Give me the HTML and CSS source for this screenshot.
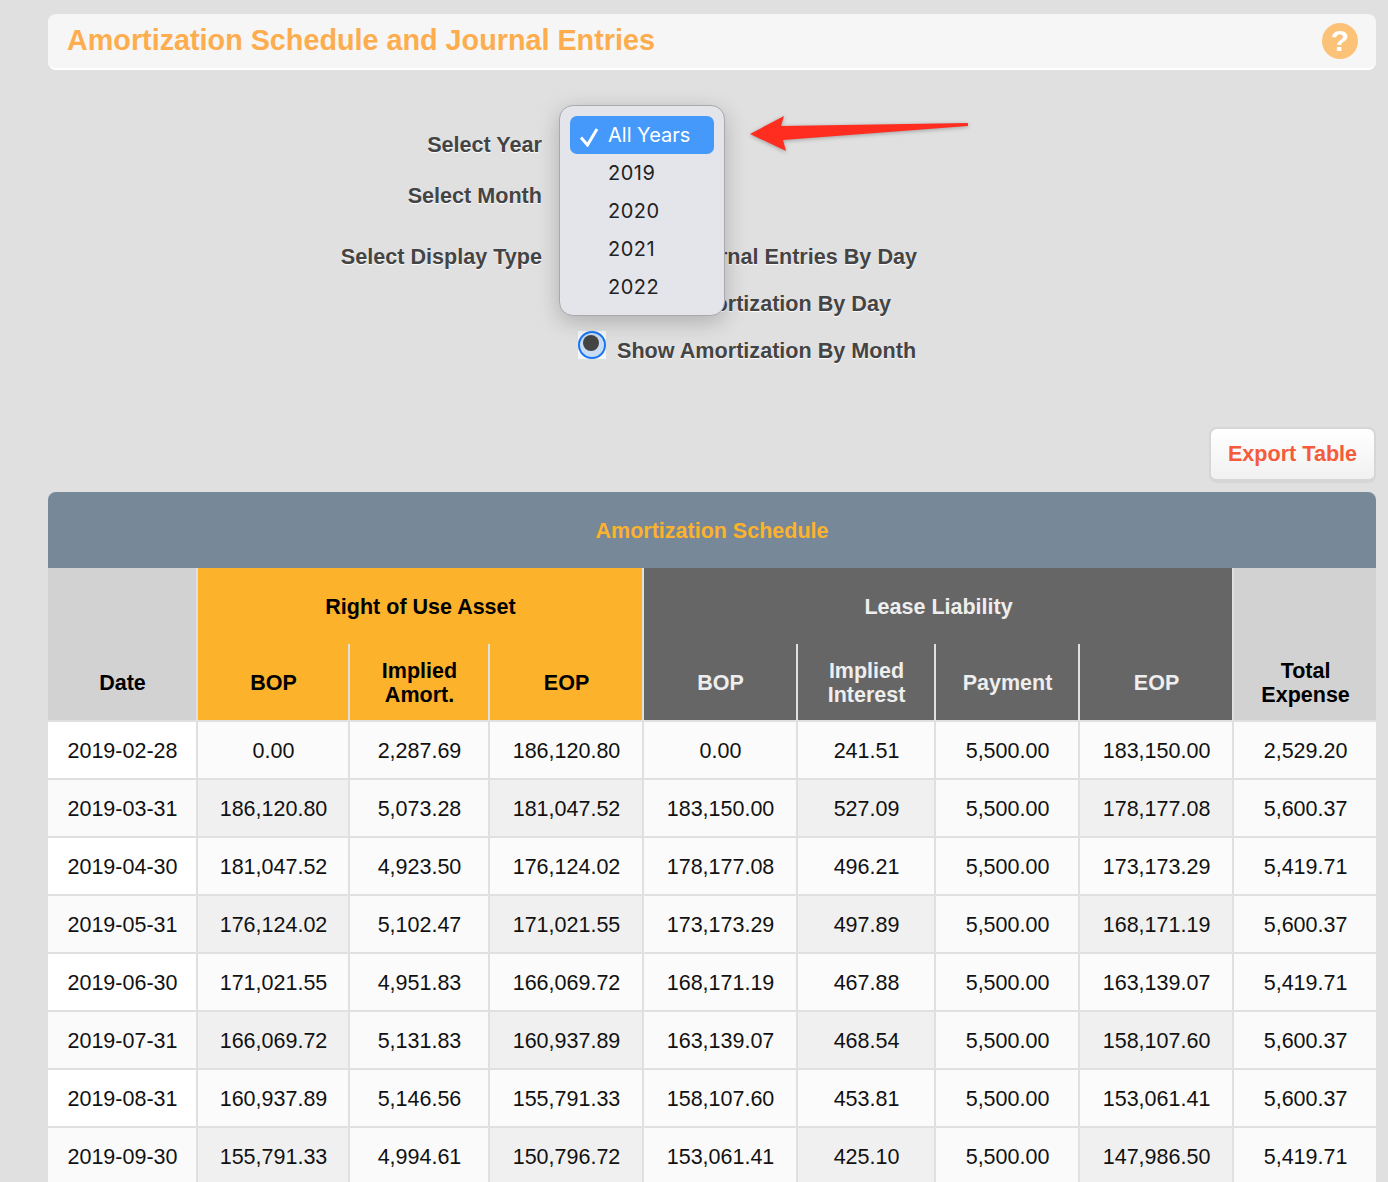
FILE: index.html
```html
<!DOCTYPE html>
<html lang="en">
<head>
  <meta charset="UTF-8" />
  <title>Amortization Schedule and Journal Entries</title>
  <link rel="stylesheet" href="styles.css">
</head>
<body>

  <div class="page-header">
    <h1>Amortization Schedule and Journal Entries</h1>
    <span class="help-icon">?</span>
  </div>

  <div class="filters">
    <label class="filter-label year-label">Select Year</label>
    <div class="filter-control year-control"></div>

    <label class="filter-label month-label">Select Month</label>
    <div class="filter-control month-control"></div>

    <label class="filter-label type-label">Select Display Type</label>
    <div class="radio-list">
      <div class="radio-row"><span class="radio"></span><span>Show Journal Entries By Day</span></div>
      <div class="radio-row"><span class="radio"></span><span>Show Amortization By Day</span></div>
      <div class="radio-row"><span class="radio checked"></span><span>Show Amortization By Month</span></div>
    </div>

    <div class="year-menu">
      <div class="year-option selected">
        <svg class="check" viewBox="0 0 20 20"><path d="M2 10.5 L8.5 18 L18 2" fill="none" stroke="#fff" stroke-width="3"/></svg>
        All Years
      </div>
      <div class="year-option">2019</div>
      <div class="year-option">2020</div>
      <div class="year-option">2021</div>
      <div class="year-option">2022</div>
    </div>

    <svg class="arrow" viewBox="0 0 240 60" width="240" height="60">
      <polygon points="1,29 35,11 32,21 219,18 219,21 34,35 37,46" fill="#ff2d20"/>
    </svg>
  </div>

  <div class="export-row">
    <button class="export-btn">Export Table</button>
  </div>

  <div class="schedule-title">Amortization Schedule</div>
  <table class="schedule">
    <colgroup>
      <col class="c-150"><col class="c-152"><col class="c-140"><col class="c-154"><col class="c-154">
      <col class="c-138"><col class="c-144"><col class="c-154"><col class="c-142">
    </colgroup>
    <thead>
      <tr class="group-row">
        <th class="grey"></th>
        <th class="orange" colspan="3">Right of Use Asset</th>
        <th class="dark" colspan="4">Lease Liability</th>
        <th class="grey"></th>
      </tr>
      <tr class="sub-row">
        <th class="grey">Date</th>
        <th class="orange">BOP</th>
        <th class="orange">Implied<br>Amort.</th>
        <th class="orange">EOP</th>
        <th class="dark">BOP</th>
        <th class="dark">Implied<br>Interest</th>
        <th class="dark">Payment</th>
        <th class="dark">EOP</th>
        <th class="grey">Total<br>Expense</th>
      </tr>
    </thead>
    <tbody>
      <tr><td>2019-02-28</td><td>0.00</td><td>2,287.69</td><td>186,120.80</td><td>0.00</td><td>241.51</td><td>5,500.00</td><td>183,150.00</td><td>2,529.20</td></tr>
      <tr><td>2019-03-31</td><td>186,120.80</td><td>5,073.28</td><td>181,047.52</td><td>183,150.00</td><td>527.09</td><td>5,500.00</td><td>178,177.08</td><td>5,600.37</td></tr>
      <tr><td>2019-04-30</td><td>181,047.52</td><td>4,923.50</td><td>176,124.02</td><td>178,177.08</td><td>496.21</td><td>5,500.00</td><td>173,173.29</td><td>5,419.71</td></tr>
      <tr><td>2019-05-31</td><td>176,124.02</td><td>5,102.47</td><td>171,021.55</td><td>173,173.29</td><td>497.89</td><td>5,500.00</td><td>168,171.19</td><td>5,600.37</td></tr>
      <tr><td>2019-06-30</td><td>171,021.55</td><td>4,951.83</td><td>166,069.72</td><td>168,171.19</td><td>467.88</td><td>5,500.00</td><td>163,139.07</td><td>5,419.71</td></tr>
      <tr><td>2019-07-31</td><td>166,069.72</td><td>5,131.83</td><td>160,937.89</td><td>163,139.07</td><td>468.54</td><td>5,500.00</td><td>158,107.60</td><td>5,600.37</td></tr>
      <tr><td>2019-08-31</td><td>160,937.89</td><td>5,146.56</td><td>155,791.33</td><td>158,107.60</td><td>453.81</td><td>5,500.00</td><td>153,061.41</td><td>5,600.37</td></tr>
      <tr><td>2019-09-30</td><td>155,791.33</td><td>4,994.61</td><td>150,796.72</td><td>153,061.41</td><td>425.10</td><td>5,500.00</td><td>147,986.50</td><td>5,419.71</td></tr>
    </tbody>
  </table>

</body>
</html>
```
FILE: styles.css
```css
html {
  height: 100%;
  overflow: hidden;
}

body {
  margin: 0;
  padding: 14px 12px 0 48px;
  background: #e0e0e0;
  font-family: "Liberation Sans", Arial, sans-serif;
  color: #000;
}

.page-header {
  height: 54px;
  background: #f6f6f6;
  border-bottom: 2px solid #fff;
  border-radius: 8px;
  display: flex;
  align-items: center;
  justify-content: space-between;
  padding: 0 18px 0 19px;
}

.page-header h1 {
  margin: 0 0 2px;
  font-size: 28.75px;
  font-weight: bold;
  color: #fdad4e;
}

.help-icon {
  width: 36px;
  height: 36px;
  border-radius: 50%;
  background: #fcc278;
  color: #fff;
  font-size: 30px;
  font-weight: bold;
  line-height: 36px;
  text-align: center;
}

.filters {
  position: relative;
  height: 356px;
  display: grid;
  grid-template-columns: 494px 1fr;
  grid-template-rows: 52px 60px auto;
  column-gap: 36px;
  align-content: start;
  padding-top: 48px;
  box-sizing: border-box;
  font-size: 21.6px;
  font-weight: bold;
  color: #444;
  text-shadow: 0 1px 1px #fff;
}

.filter-label {
  text-align: right;
  line-height: 52px;
}

.year-label,
.type-label {
  margin-top: 1px;
}

.radio-list {
  display: flex;
  flex-direction: column;
  padding-top: 3px;
}

.radio-row {
  height: 47px;
  display: flex;
  align-items: center;
  gap: 11px;
}

.radio {
  width: 28px;
  height: 28px;
  position: relative;
  top: -6px;
  background: #fff;
  flex: none;
}

.radio.checked {
  background: #f4f6f8;
}

.radio.checked::before {
  content: "";
  position: absolute;
  inset: 0;
  border: 2.5px solid #1976f0;
  background: #c9dcf5;
  border-radius: 50%;
  box-sizing: border-box;
}

.radio.checked::after {
  content: "";
  position: absolute;
  left: 5px;
  top: 4px;
  width: 16px;
  height: 16px;
  background: #444;
  border-radius: 50%;
}

.year-menu {
  position: absolute;
  left: 511px;
  top: 35px;
  width: 166px;
  height: 211px;
  box-sizing: border-box;
  padding: 10px;
  background: #e4e5eb;
  border: 1px solid #a9a9ab;
  border-radius: 14px;
  box-shadow: 0 6px 22px rgba(0, 0, 0, 0.22);
  font-family: Inter, "Liberation Sans", sans-serif;
  font-size: 20px;
  font-weight: normal;
  letter-spacing: 0.5px;
  color: #222;
  text-shadow: none;
}

.year-option {
  position: relative;
  height: 38px;
  line-height: 38px;
  padding-left: 38px;
  border-radius: 7px;
}

.year-option.selected {
  background: #4499fb;
  color: #fff;
  letter-spacing: 0;
}

.check {
  position: absolute;
  left: 9px;
  top: 11px;
  width: 20px;
  height: 20px;
}

.arrow {
  position: absolute;
  left: 701px;
  top: 35px;
  filter: drop-shadow(0 1px 2px rgba(0, 0, 0, 0.3));
}

.export-row {
  display: flex;
  justify-content: flex-end;
  height: 66px;
}

.export-btn {
  width: 167px;
  height: 56px;
  margin-top: 1px;
  background: linear-gradient(#fff, #f1f1f1);
  border: 2px solid #d6d6d6;
  border-bottom-width: 4px;
  border-radius: 8px;
  font-family: inherit;
  font-size: 21.6px;
  font-weight: bold;
  color: #f55b3a;
  padding: 0;
}

.schedule-title {
  height: 76px;
  line-height: 78px;
  text-align: center;
  background: #778899;
  color: #fdb22c;
  border-radius: 8px 8px 0 0;
  font-size: 21.5px;
  font-weight: bold;
}

.schedule {
  width: 1328px;
  table-layout: fixed;
  border-collapse: separate;
  border-spacing: 0;
  font-size: 21.5px;
}

.c-150 { width: 150px; }
.c-152 { width: 152px; }
.c-140 { width: 140px; }
.c-154 { width: 154px; }
.c-138 { width: 138px; }
.c-144 { width: 144px; }
.c-142 { width: 142px; }

th {
  padding: 2px 0 0 1px;
  font-size: 21.5px;
  line-height: 24px;
  font-weight: bold;
  text-align: center;
  border-right: 2px solid #e0e0e0;
}

.group-row th {
  height: 74px;
  vertical-align: middle;
}

.sub-row th {
  height: 74px;
  vertical-align: middle;
  border-bottom: 2px solid #e0e0e0;
}

th:last-child,
td:last-child {
  border-right: none;
}

.grey {
  background: #d2d2d2;
}

.orange {
  background: #fdb22c;
}

.dark {
  background: #666;
  color: #eee;
}

td {
  height: 54px;
  padding: 2px 0 0 1px;
  text-align: center;
  color: #111;
  background: #fbfbfb;
  border-right: 2px solid #e0e0e0;
  border-bottom: 2px solid #e0e0e0;
}

td:first-child {
  background: #fff;
}

tbody tr:nth-child(even) td {
  background: #fafafa;
}

tbody tr:nth-child(even) td:nth-child(even) {
  background: #f0f0f0;
}
```
